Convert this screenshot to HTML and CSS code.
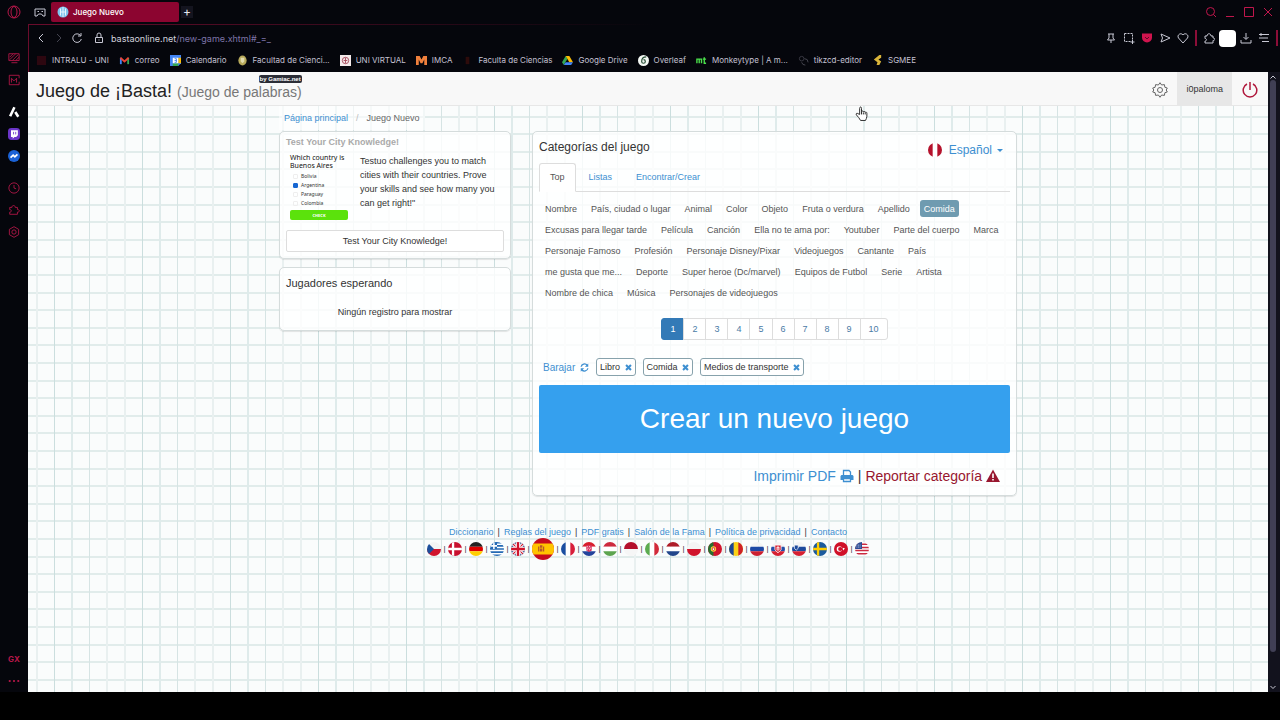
FILE: index.html
```html
<!DOCTYPE html>
<html lang="es">
<head>
    <meta charset="UTF-8">
    <meta name="viewport" content="width=device-width, initial-scale=1.0">
    <title>Juego Nuevo</title>
    <link rel="stylesheet" href="styles.css">
</head>
<body>

    <div class="browser">
        <aside class="sidebar">
            <button class="side-btn logo" aria-label="Opera"><svg viewBox="0 0 14 14"><circle cx="7" cy="7" r="6"/><ellipse cx="7" cy="7" rx="3" ry="5.5"/></svg></button>
            <button class="side-btn" aria-label="Fondo"><svg viewBox="0 0 14 14"><path d="M1 2h12v8H1zM4 12.500h7M2 6l4-4M2 9l7-7M5 10l7-7M9 10l4-4"/></svg></button>
            <button class="side-btn" aria-label="Mods"><svg viewBox="0 0 14 14"><path d="M13 9v3.500H1.500V1.500H13V5M4 10V5l3 3 3-3v5"/></svg></button>
            <button class="side-btn aria" aria-label="Aria"><svg viewBox="0 0 14 14"><path d="M7.500 1.500L2.500 12M8.500 7l3.500 5.500"/></svg></button>
            <button class="side-btn" aria-label="Twitch"><svg viewBox="0 0 14 14"><rect class="twitch" width="14" height="14" rx="4"/><path class="twitch-box" d="M3.500 2.500h8v6l-2 2H7.500l-2 2v-2h-2z"/><path class="twitch-eyes" d="M6.500 4.500v3M9 4.500v3"/></svg></button>
            <button class="side-btn messenger" aria-label="Messenger"><svg viewBox="0 0 14 14"><circle class="blue" cx="7" cy="7" r="7"/><path class="white" d="M3 9l3-3 2 2 3-3"/></svg></button>
            <button class="side-btn" aria-label="Historial"><svg viewBox="0 0 14 14"><circle cx="7" cy="7" r="6"/><path d="M7 3.500V7l2.500 1"/></svg></button>
            <button class="side-btn" aria-label="Extensiones"><svg viewBox="0 0 14 14"><path d="M2 4h2.500c0-3 4-3 4 0H11v2.500c3 0 3 3 0 3V12H2V9.500c2.500 0 2.500-3 0-3z"/></svg></button>
            <button class="side-btn" aria-label="Ajustes"><svg viewBox="0 0 14 14"><path d="M7 .8l5.400 3.100v6.200L7 13.200l-5.400-3.100V3.900z"/><circle cx="7" cy="7" r="2.500"/></svg></button>
            <span class="gx">GX</span>
            <button class="side-btn dots" aria-label="Más"><svg viewBox="0 0 14 14"><circle cx="2" cy="7" r="1.300"/><circle cx="7" cy="7" r="1.300"/><circle cx="12" cy="7" r="1.300"/></svg></button>
        </aside>

        <div class="window">
            <div class="tab-bar">
                <svg class="gamepad" viewBox="0 0 12 12"><path d="M1 3h10v7H9L7.500 8h-3L3 10H1zM3.500 5.500h1.500M7.500 5.500H9"/></svg>
                <div class="tab">
                    <svg viewBox="0 0 12 12"><circle cx="6" cy="6" r="5.500" fill="#7fc4ee"/><path d="M3.500 2.500v7M6 1v10M8.500 2.500v7M3 6h6" stroke="#e8f6ff" fill="none"/></svg>
                    <span>Juego Nuevo</span>
                </div>
                <button class="new-tab" aria-label="Nueva pestaña">+</button>
                <div class="win-controls">
                    <svg viewBox="0 0 12 12"><circle cx="5.500" cy="5.500" r="4"/><path d="M8.500 8.500L11 11"/></svg>
                    <svg viewBox="0 0 12 12"><path d="M2 10.500h8"/></svg>
                    <svg viewBox="0 0 12 12"><path d="M1.500 1.500h9v9h-9z"/></svg>
                    <svg viewBox="0 0 12 12"><path d="M2 2l8 8M10 2l-8 8"/></svg>
                </div>
            </div>

            <div class="address-bar">
                <div class="nav-icons">
                    <svg viewBox="0 0 12 12"><path d="M8 2L4 6l4 4"/></svg>
                    <svg class="off" viewBox="0 0 12 12"><path d="M4 2l4 4-4 4"/></svg>
                    <svg viewBox="0 0 12 12"><path d="M9.500 3.500A4.300 4.300 0 1 0 10.300 7M10 1v3H7"/></svg>
                </div>
                <svg class="lock" viewBox="0 0 12 12"><path d="M2.500 5.500h7v5h-7zM4 5.500V3a2 2 0 0 1 4 0v2.500M6 7.500v1"/></svg>
                <span class="url">bastaonline.net<span>/new-game.xhtml#_=_</span></span>
                <div class="tools">
                    <svg viewBox="0 0 12 12"><path d="M3 2h6M4 2v4L2.500 8h7L8 6V2M6 8v3"/></svg>
                    <svg viewBox="0 0 12 12"><path d="M1.500 1.500h8v6M1.500 1.500v8h6" stroke-dasharray="2 1"/><path d="M9.500 8v4M7.500 10h4"/></svg>
                    <svg viewBox="0 0 12 12"><path class="shield" d="M1 1.500h10v4a5 5 0 0 1-10 0z"/><path d="M4 5l2 2 2-2" stroke="#5c0a24"/></svg>
                    <svg viewBox="0 0 12 12"><path d="M2 2l9 4-9 4 1.500-4z"/></svg>
                    <svg viewBox="0 0 12 12"><path d="M6 11L1.500 6C-.5 3 4 0 6 3c2-3 6.500 0 4.500 3z"/></svg>
                    <i class="divider"></i>
                    <svg viewBox="0 0 12 12"><path d="M2 4h2c0-3 4-3 4 0h2v2c2.500 0 2.500 2.500 0 2.500V11H2V9c2 0 2-2.500 0-2.500z"/></svg>
                    <i class="avatar"></i>
                    <svg viewBox="0 0 12 12"><path d="M6 1v6M3.500 5L6 7.500 8.500 5M1 8v3h10V8"/></svg>
                    <svg viewBox="0 0 12 12"><path d="M1 2.500h10M1 6h7M4 9.500h7M3 1v3M9 5v2"/></svg>
                    <i class="divider"></i>
                </div>
            </div>

            <nav class="bookmarks">
                <a href="#"><svg viewBox="0 0 12 12"><rect x="1" y="1" width="10" height="10" fill="#2d0710"/></svg>INTRALU - UNI</a>
                <a href="#"><svg viewBox="0 0 12 12"><path d="M2 10V3" stroke="#4285f4" stroke-width="2"/><path d="M10 10V3" stroke="#34a853" stroke-width="2"/><path d="M1.500 3L6 7l4.500-4" stroke="#ea4335" stroke-width="2" fill="none"/></svg>correo</a>
                <a href="#"><svg viewBox="0 0 12 12"><path d="M0 0h12v9l-3 3H0z" fill="#4285f4"/><path d="M9 3h3v6H9z" fill="#fbbc04"/><path d="M3 9h6v3H3z" fill="#34a853"/><path d="M3 3h6v6H3z" fill="#fff"/><path d="M5 4h2v4H5M5 6h2" stroke="#4285f4" fill="none"/></svg>Calendario</a>
                <a href="#"><svg viewBox="0 0 12 12"><ellipse cx="6" cy="6" rx="4.500" ry="5.500" fill="#b7a95a"/><path d="M4 3h4v4L6 9 4 7z" fill="#e2dcae"/></svg>Facultad de Cienci...</a>
                <a href="#"><svg viewBox="0 0 12 12"><rect width="12" height="12" fill="#f3e9ea"/><circle cx="6" cy="6" r="3.500" fill="none" stroke="#a5485a"/><path d="M6 3v6M4 6h4" stroke="#a5485a"/></svg>UNI VIRTUAL</a>
                <a href="#"><svg viewBox="0 0 12 12"><path d="M0 1h4l2 4 2-4h4v10H9V5L7 9H5L3 5v6H0z" fill="#f0803c"/></svg>IMCA</a>
                <a href="#"><svg viewBox="0 0 12 12"><path d="M4 2h4v8H4z" fill="#2d0b0b"/></svg>Faculta de Ciencias</a>
                <a href="#"><svg viewBox="0 0 12 12"><path d="M4 1L0 8l2 3 4-7z" fill="#34a853"/><path d="M4 1h4l4 7H8z" fill="#fbbc04"/><path d="M4 8h8l-2 3H2z" fill="#4285f4"/></svg>Google Drive</a>
                <a href="#"><svg viewBox="0 0 12 12"><circle cx="6" cy="6" r="6" fill="#f4f8f4"/><path d="M9 2C6 2 4 4 4 7a2 2 0 1 0 2-2" stroke="#264d35" stroke-width="1.300" fill="none"/></svg>Overleaf</a>
                <a href="#"><svg viewBox="0 0 12 12"><path d="M1 9V4.500h5V9M3.500 5v4M9 2.500V9h2M7.500 4.500H11" stroke="#4be04b" stroke-width="1.500" fill="none"/></svg>Monkeytype | A m...</a>
                <a href="#"><svg viewBox="0 0 12 12"><circle cx="4" cy="4" r="2.500" fill="none" stroke="#3a3a44"/><path d="M7 4a4 4 0 0 1 4 4M4 8a4 4 0 0 0 4 3" fill="none" stroke="#4a4a54"/></svg>tikzcd-editor</a>
                <a href="#"><svg viewBox="0 0 12 12"><path d="M8 0h2v3L7 5l3 2-2 4H5l1-3-4-3z" fill="#d9b43a"/></svg>SGMEE</a>
            </nav>

            <div class="viewport">
                <div class="page">
                    <header class="site-header">
                        <h1>Juego de ¡Basta! <small>(Juego de palabras)</small><span class="by">by Gamiac.net</span></h1>
                        <div class="user-menu">
                            <button class="gear" aria-label="Configuración"><svg viewBox="0 0 16 16"><path d="M8 .7l1.600 2.300 2.800-.4.5 2.700L15.300 6 14.200 8l1.100 2-2.400.7-.5 2.700-2.800-.4L8 15.300 6.400 13l-2.800.4-.5-2.700L.7 10l1.100-2L.7 6l2.400-.7.5-2.700 2.800.4z"/><circle cx="8" cy="8" r="2.500"/></svg></button>
                            <a class="user" href="#">i0paloma</a>
                            <button class="power" aria-label="Salir"><svg viewBox="0 0 16 16"><path d="M5 2A6.800 6.800 0 1 0 11 2M8 0v8"/></svg></button>
                        </div>
                    </header>

                    <div class="container">
                        <div class="breadcrumb"><a href="#">Página principal</a><i>/</i><span>Juego Nuevo</span></div>

                        <div class="columns">
                            <div class="left">
                                <section class="panel promo">
                                    <h3>Test Your City Knowledge!</h3>
                                    <div class="promo-body">
                                        <div class="quiz">
                                            <p>Which country is<br>Buenos Aires</p>
                                            <label><input type="checkbox">Bolivia</label>
                                            <label><input type="checkbox" checked>Argentina</label>
                                            <label><input type="checkbox">Paraguay</label>
                                            <label><input type="checkbox">Colombia</label>
                                            <button>CHECK</button>
                                        </div>
                                        <p>Testuo challenges you to match cities with their countries. Prove your skills and see how many you can get right!"</p>
                                    </div>
                                    <button class="promo-btn">Test Your City Knowledge!</button>
                                </section>
                                <section class="panel waiting">
                                    <h2>Jugadores esperando</h2>
                                    <p>Ningún registro para mostrar</p>
                                </section>
                            </div>

                            <section class="panel game">
                                <div class="game-head">
                                    <h2>Categorías del juego</h2>
                                    <button class="language">
                                        <svg class="flag" viewBox="0 0 18 18"><path fill="#fff" d="M0 0h18v18H0z"/><path fill="#b5122c" d="M0 0h6v18H0zM12 0h6v18h-6z"/></svg>
                                        Español <i class="caret"></i>
                                    </button>
                                </div>
                                <nav class="tabs">
                                    <a class="active" href="#">Top</a>
                                    <a href="#">Listas</a>
                                    <a href="#">Encontrar/Crear</a>
                                </nav>
                                <div class="categories">
                                    <div><button>Nombre</button><button>País, ciudad o lugar</button><button>Animal</button><button>Color</button><button>Objeto</button><button>Fruta o verdura</button><button>Apellido</button><button class="selected">Comida</button></div>
                                    <div><button>Excusas para llegar tarde</button><button>Película</button><button>Canción</button><button>Ella no te ama por:</button><button>Youtuber</button><button>Parte del cuerpo</button><button>Marca</button></div>
                                    <div><button>Personaje Famoso</button><button>Profesión</button><button>Personaje Disney/Pixar</button><button>Videojuegos</button><button>Cantante</button><button>País</button></div>
                                    <div><button>me gusta que me...</button><button>Deporte</button><button>Super heroe (Dc/marvel)</button><button>Equipos de Futbol</button><button>Serie</button><button>Artista</button></div>
                                    <div><button>Nombre de chica</button><button>Música</button><button>Personajes de videojuegos</button></div>
                                </div>
                                <nav class="pagination">
                                    <a class="active" href="#">1</a><a href="#">2</a><a href="#">3</a><a href="#">4</a><a href="#">5</a><a href="#">6</a><a href="#">7</a><a href="#">8</a><a href="#">9</a><a href="#">10</a>
                                </nav>
                                <div class="chosen">
                                    <a href="#">Barajar <svg viewBox="0 0 12 12"><path d="M1.500 5A4.500 4.500 0 0 1 9.500 3M10.500 7a4.500 4.500 0 0 1-8 2" fill="none" stroke="currentColor" stroke-width="1.700"/><path d="M11 .5V5H6.500zM1 11.500V7h4.500z" fill="currentColor"/></svg></a>
                                    <button>Libro <svg viewBox="0 0 10 10"><path d="M1.500 1.500l7 7M8.500 1.500l-7 7"/></svg></button>
                                    <button>Comida <svg viewBox="0 0 10 10"><path d="M1.500 1.500l7 7M8.500 1.500l-7 7"/></svg></button>
                                    <button>Medios de transporte <svg viewBox="0 0 10 10"><path d="M1.500 1.500l7 7M8.500 1.500l-7 7"/></svg></button>
                                </div>
                                <button class="create">Crear un nuevo juego</button>
                                <div class="actions">
                                    <a href="#">Imprimir PDF <svg viewBox="0 0 14 14"><path d="M3.500 6V1.500h5.500l1.500 1.500v3M3.500 9.500h7v3h-7z" fill="none" stroke="currentColor" stroke-width="1.300"/><path d="M1.500 6h11l1 1v4h-2.500V9H3v2H.5V7z" fill="currentColor"/></svg></a>
                                    <span>|</span>
                                    <a class="report" href="#">Reportar categoría <svg viewBox="0 0 14 14"><path d="M7 .5l7 12.500H0z" fill="currentColor"/><path d="M7 4.500V9M7 10v1.500" stroke="#fff" stroke-width="1.600"/></svg></a>
                                </div>
                            </section>
                        </div>
                    </div>

                    <footer class="site-footer">
                        <div class="links"><a href="#">Diccionario</a><span>|</span><a href="#">Reglas del juego</a><span>|</span><a href="#">PDF gratis</a><span>|</span><a href="#">Salón de la Fama</a><span>|</span><a href="#">Política de privacidad</a><span>|</span><a href="#">Contacto</a></div>
                        <div class="flags">
                            <svg class="flag" viewBox="0 0 18 18"><path fill="#f4f4f4" d="M0 0h18v9H0z"/><path fill="#d0142c" d="M0 9h18v9H0z"/><path fill="#1d4f9c" d="M0 0l9 9-9 9z"/></svg><i>|</i>
                            <svg class="flag" viewBox="0 0 18 18"><path fill="#c8102e" d="M0 0h18v18H0z"/><path stroke="#fff" stroke-width="3" d="M6.500 0v18M0 9h18"/></svg><i>|</i>
                            <svg class="flag" viewBox="0 0 18 18"><path fill="#222" d="M0 0h18v6H0z"/><path fill="#d00" d="M0 6h18v6H0z"/><path fill="#ffce00" d="M0 12h18v6H0z"/></svg><i>|</i>
                            <svg class="flag" viewBox="0 0 18 18"><path fill="#fff" d="M0 0h18v18H0z"/><path stroke="#2569b4" stroke-width="2" d="M0 1h18M0 5h18M0 9h18M0 13h18M0 17h18"/><path fill="#2569b4" d="M0 0h9v9H0z"/><path stroke="#fff" stroke-width="2" d="M5 0v9M0 5h9"/></svg><i>|</i>
                            <svg class="flag" viewBox="0 0 18 18"><path fill="#25397c" d="M0 0h18v18H0z"/><path stroke="#fff" stroke-width="4" d="M0 0l18 18M18 0L0 18"/><path stroke="#cf142b" stroke-width="1.500" d="M0 0l18 18M18 0L0 18"/><path stroke="#fff" stroke-width="6" d="M9 0v18M0 9h18"/><path stroke="#cf142b" stroke-width="3" d="M9 0v18M0 9h18"/></svg><i>|</i>
                            <svg class="flag current" viewBox="0 0 18 18"><path fill="#c60b1e" d="M0 0h18v18H0z"/><path fill="#ffc400" d="M0 4.500h18v9H0z"/><path fill="#b5562b" d="M5 7h1v4H5zM9 7h1v4H9zM6.500 6h2v2h-2zM6.500 8.500h2V11h-2z"/></svg><i>|</i>
                            <svg class="flag" viewBox="0 0 18 18"><path fill="#fff" d="M0 0h18v18H0z"/><path fill="#1b4da0" d="M0 0h6v18H0z"/><path fill="#d81e3a" d="M12 0h6v18h-6z"/></svg><i>|</i>
                            <svg class="flag" viewBox="0 0 18 18"><path fill="#d81e2c" d="M0 0h18v6H0z"/><path fill="#fff" d="M0 6h18v6H0z"/><path fill="#24449c" d="M0 12h18v6H0z"/><path fill="#d8305c" d="M5.500 4h7v7L9 13l-3.500-2z"/><path stroke="#fff" stroke-dasharray="1.500 1.500" d="M6 6h6M7 8h6M6 10h6"/></svg><i>|</i>
                            <svg class="flag" viewBox="0 0 18 18"><path fill="#cd2a3e" d="M0 0h18v6H0z"/><path fill="#fff" d="M0 6h18v6H0z"/><path fill="#5ca44e" d="M0 12h18v6H0z"/></svg><i>|</i>
                            <svg class="flag" viewBox="0 0 18 18"><path fill="#b4102c" d="M0 0h18v9H0z"/><path fill="#f6f6f6" d="M0 9h18v9H0z"/></svg><i>|</i>
                            <svg class="flag" viewBox="0 0 18 18"><path fill="#fff" d="M0 0h18v18H0z"/><path fill="#5cab50" d="M0 0h6v18H0z"/><path fill="#d22a3a" d="M12 0h6v18h-6z"/></svg><i>|</i>
                            <svg class="flag" viewBox="0 0 18 18"><path fill="#ae1c28" d="M0 0h18v6H0z"/><path fill="#fff" d="M0 6h18v6H0z"/><path fill="#21468b" d="M0 12h18v6H0z"/></svg><i>|</i>
                            <svg class="flag" viewBox="0 0 18 18"><path fill="#f4f4f4" d="M0 0h18v9H0z"/><path fill="#d0142c" d="M0 9h18v9H0z"/></svg><i>|</i>
                            <svg class="flag" viewBox="0 0 18 18"><path fill="#d0142c" d="M0 0h18v18H0z"/><path fill="#27702f" d="M0 0h7v18H0z"/><circle cx="7" cy="9" r="3.500" fill="#ffd93b"/><path fill="#fff" stroke="#c22" d="M5.500 7.500h3V10L7 11l-1.500-1z"/></svg><i>|</i>
                            <svg class="flag" viewBox="0 0 18 18"><path fill="#fcd116" d="M0 0h18v18H0z"/><path fill="#1d4596" d="M0 0h6v18H0z"/><path fill="#ce2028" d="M12 0h6v18h-6z"/></svg><i>|</i>
                            <svg class="flag" viewBox="0 0 18 18"><path fill="#f4f4f4" d="M0 0h18v6H0z"/><path fill="#1d48a4" d="M0 6h18v6H0z"/><path fill="#cc2030" d="M0 12h18v6H0z"/></svg><i>|</i>
                            <svg class="flag" viewBox="0 0 18 18"><path fill="#f4f4f4" d="M0 0h18v6H0z"/><path fill="#244ea8" d="M0 6h18v6H0z"/><path fill="#d62032" d="M0 12h18v6H0z"/><path fill="#d62032" stroke="#fff" d="M5 4h8v6l-4 4-4-4z"/><path stroke="#fff" d="M9 5v7M7 7h4M6.500 9h5"/></svg><i>|</i>
                            <svg class="flag" viewBox="0 0 18 18"><path fill="#f4f4f4" d="M0 0h18v6H0z"/><path fill="#1d4a9c" d="M0 6h18v6H0z"/><path fill="#d62032" d="M0 12h18v6H0z"/><path fill="#1d4a9c" stroke="#fff" d="M3 4h5v4L5.500 10.500 3 8z"/></svg><i>|</i>
                            <svg class="flag" viewBox="0 0 18 18"><path fill="#1a5a9c" d="M0 0h18v18H0z"/><path stroke="#fecc00" stroke-width="3" d="M6.500 0v18M0 9h18"/></svg><i>|</i>
                            <svg class="flag" viewBox="0 0 18 18"><path fill="#d01028" d="M0 0h18v18H0z"/><circle cx="7" cy="9" r="3.500" fill="#fff"/><circle cx="8" cy="9" r="2.700" fill="#d01028"/><path fill="#fff" d="M11 7.500l3 .5-2 3z"/></svg><i>|</i>
                            <svg class="flag" viewBox="0 0 18 18"><path fill="#fff" d="M0 0h18v18H0z"/><path stroke="#cc2a40" stroke-width="2" d="M0 3h18M0 7h18M0 11h18M0 15h18"/><path fill="#2c4c94" d="M0 0h9v9H0z"/><path stroke="#fff" stroke-dasharray="1 1" d="M2 4h6M2 6.500h6"/></svg>
                        </div>
                    </footer>

                    <svg class="cursor" viewBox="0 0 14 16"><path d="M5 9V2.500c0-2 2-2 2 0V6c0-1 2-1 2 .5 0-1 2-1 2 .5 0-1 1.800-.8 1.800.8V11c0 2-1 3-1.500 4.500H6C5 13 3 11.500 1.500 9.500c-1-1.500.8-2.300 1.700-1.300z" fill="#fff" stroke="#222"/><path d="M7 6v3M9 7v2M11 7.500V9" stroke="#222"/></svg>
                </div>
                <div class="scrollbar"><svg viewBox="0 0 6 6"><path d="M0.500 4.500L3 2l2.500 2.500"/></svg><i></i><svg viewBox="0 0 6 6"><path d="M0.500 2L3 4.500 5.500 2"/></svg></div>
            </div>
        </div>
    </div>
    <div class="bottom-bar"></div>

</body>
</html>
```
FILE: styles.css
```css
* {
    box-sizing: border-box;
}

body {
    margin: 0;
    min-height: 100vh;
    display: flex;
    flex-direction: column;
    background-color: #05060c;
    font-family: "Liberation Sans", Arial, sans-serif;
    font-size: 9px;
    color: #333;
}

h1, h2, h3, p {
    margin: 0;
    font-weight: normal;
}

a {
    color: #3d8fd1;
    text-decoration: none;
}

button {
    font: inherit;
    color: inherit;
    background: none;
    border: none;
    padding: 0;
    cursor: pointer;
}

.browser {
    flex: 1;
    display: flex;
}

.bottom-bar {
    height: 28px;
    background-color: #000;
}

/* sidebar */
.sidebar {
    width: 28px;
    display: flex;
    flex-direction: column;
    align-items: center;
    gap: 8px;
    padding: 5px 0 4px;
}

.side-btn {
    height: 14px;
}

.side-btn svg {
    display: block;
    width: 12px;
    height: 14px;
    fill: none;
    stroke: #b8174a;
}

.logo {
    margin-bottom: 24px;
}

.logo svg {
    width: 14px;
}

.aria {
    margin-top: 10px;
}

.aria svg {
    stroke: #fff;
    stroke-width: 3;
}

.messenger {
    margin-bottom: 10px;
}

.side-btn .twitch {
    fill: #6b35c9;
    stroke: none;
}

.side-btn .twitch-box {
    fill: #fff;
    stroke: none;
}

.side-btn .twitch-eyes {
    stroke: #6b35c9;
}

.side-btn .blue {
    fill: #1b62d6;
    stroke: none;
}

.side-btn .white {
    stroke: #fff;
    stroke-width: 2;
}

.gx {
    margin-top: auto;
    font: bold 8px/14px Inter, sans-serif;
    color: #b8174a;
}

.dots svg {
    fill: #b8174a;
    stroke: none;
}

/* browser bars */
.window {
    flex: 1;
    min-width: 0;
    display: flex;
    flex-direction: column;
    font-family: Inter, sans-serif;
    font-size: 8px;
}

.tab-bar {
    height: 24px;
    display: flex;
    align-items: center;
    padding: 0 6px;
    color: #e6e6ee;
}

.tab-bar svg,
.address-bar svg {
    width: 12px;
    height: 12px;
    fill: none;
    stroke: #c8c8d4;
}

.gamepad {
    margin-right: 5px;
}

.tab {
    width: 128px;
    height: 20px;
    display: flex;
    align-items: center;
    gap: 4px;
    padding: 0 6px;
    border-radius: 2px;
    background-color: #8c0530;
    color: #fff;
    font-weight: 500;
}

.tab svg {
    stroke: none;
}

.new-tab {
    width: 12px;
    height: 12px;
    margin-left: 2px;
    background-color: #14141f;
    font-size: 12px;
    line-height: 12px;
}

.win-controls {
    display: flex;
    gap: 7px;
    margin-left: auto;
}

.win-controls svg {
    stroke: #c0164c;
}

.address-bar {
    height: 27px;
    display: flex;
    align-items: center;
    padding: 0 2px 0 6px;
    border-top: 1px solid;
    border-left: 1px solid;
    border-image: linear-gradient(to right, #6b0c2c, #05060c 50%) 1;
    color: #d2d2dc;
    font-size: 9px;
}

.nav-icons {
    display: flex;
    gap: 6px;
    margin-right: 10px;
}

.address-bar .off {
    stroke: #444450;
}

.lock {
    margin-right: 6px;
}

.url span {
    color: #7d74a8;
}

.tools {
    display: flex;
    align-items: center;
    gap: 6px;
    margin-left: auto;
}

.address-bar .shield {
    fill: #d0144e;
    stroke: none;
}

.divider {
    width: 2px;
    height: 16px;
    background-color: #8c0e38;
}

.avatar {
    width: 17px;
    height: 17px;
    margin: 0 -2px;
    border-radius: 4px;
    background-color: #fff;
}

.bookmarks {
    height: 21px;
    display: flex;
    gap: 10px;
    padding: 0 7px;
    border-left: 1px solid #6b0c2c;
    white-space: nowrap;
}

.bookmarks a {
    display: flex;
    align-items: center;
    height: 18px;
    gap: 5px;
    color: #c4c1d2;
}

.bookmarks svg {
    width: 11px;
    height: 11px;
}

.viewport {
    flex: 1;
    display: flex;
    font-size: 9px;
}

.scrollbar {
    width: 12px;
    padding: 2px 4px 2px 2px;
    display: flex;
    flex-direction: column;
    background-color: #12121d;
}

.scrollbar svg {
    width: 6px;
    height: 6px;
    fill: none;
    stroke: #c8c8d4;
}

.scrollbar i {
    flex: 1;
    margin-bottom: 32px;
    border-radius: 3px;
    background-color: #403f55;
}

/* page on squared paper */
.page {
    flex: 1;
    position: relative;
    font-family: "Liberation Sans", Arial, sans-serif;
    background-color: #fafcfc;
    background-image:
        linear-gradient(to right, transparent 8px, #e9f0f0 8px 10px, transparent 10px 26px, #cbdede 26px 27px, transparent 27px 43px, #dfebeb 43px 45px, transparent 45px 61px, #d6e4e4 61px 62px, transparent 62px 78px, #e9f0f0 78px 80px, transparent 80px),
        linear-gradient(to bottom, transparent 8px, #e1eceb 8px 10px, transparent 10px 26px, #e1eceb 26px 28px, transparent 28px 44px, #e1eceb 44px 46px, transparent 46px 61px, #e1eceb 61px 63px, transparent 63px 79px, #e1eceb 79px 81px, transparent 81px);
    background-size: 88px 88px;
}

.site-header {
    height: 34px;
    display: flex;
    justify-content: space-between;
    padding-left: 8px;
    background-color: #f8f8f8;
    border-bottom: 1px solid #e7e7e7;
}

.site-header h1 {
    position: relative;
    font-size: 18px;
    line-height: 38px;
    color: #222;
}

.site-header small {
    font-size: 14px;
    color: #777;
}

.by {
    position: absolute;
    top: 3px;
    right: 0;
    padding: 0 1px;
    border-radius: 2px;
    background-color: #2b2d36;
    color: #fff;
    font-size: 6px;
    font-weight: bold;
    line-height: 8px;
}

.user-menu {
    display: flex;
}

.user-menu svg {
    display: block;
    width: 16px;
    height: 16px;
    fill: none;
    stroke: #666;
}

.gear {
    padding: 2px 9px 0;
}

.user {
    padding: 0 9px;
    background-color: #e7e7e7;
    color: #333;
    line-height: 34px;
}

.power {
    padding: 2px 10px 0;
}

.user-menu .power svg {
    stroke: #b0173b;
    stroke-width: 1.5;
}

.container {
    max-width: 738px;
    margin: 0 auto;
}

.breadcrumb {
    display: flex;
    gap: 8px;
    width: max-content;
    margin-bottom: 1px;
    padding: 0 5px;
    line-height: 24px;
    color: #666;
    background-color: rgba(255, 255, 255, 0.6);
}

.breadcrumb i {
    color: #bbb;
    font-style: normal;
}

.columns {
    display: grid;
    grid-template-columns: 232px 1fr;
    align-items: start;
    gap: 21px;
}

.left {
    display: grid;
    gap: 8px;
}

.panel {
    padding: 7px 6px;
    border: 1px solid #d5dcdc;
    border-radius: 5px;
    background-color: rgba(255, 255, 255, 0.8);
    box-shadow: 0 1px 1px rgba(0, 0, 0, 0.1);
}

.panel h2 {
    font-size: 11px;
    line-height: 16px;
}

.promo {
    padding: 4px 6px 6px;
}

.promo h3 {
    font-size: 9px;
    font-weight: bold;
    line-height: 13px;
    color: #aaa;
}

.promo-body {
    display: flex;
    gap: 12px;
    padding: 5px 0 10px 4px;
}

.promo-body > p {
    flex: 1;
    line-height: 14px;
}

.quiz {
    width: 58px;
    font: 5px/9px "Noto Sans", sans-serif;
}

.quiz p {
    margin-bottom: 2px;
    font-size: 7px;
    line-height: 8px;
    white-space: nowrap;
    color: #111;
}

.quiz label {
    display: flex;
    align-items: center;
    gap: 3px;
    padding-left: 3px;
}

.quiz input {
    appearance: none;
    width: 5px;
    height: 5px;
    margin: 0;
    border: 1px solid #eee;
    border-radius: 1px;
}

.quiz input:checked {
    border-color: #1767d2;
    background-color: #1767d2;
}

.quiz button {
    display: block;
    width: 100%;
    height: 10px;
    margin-top: 2px;
    border-radius: 2px;
    background-color: #5be20c;
    color: #fff;
    font-weight: bold;
    font-size: 4px;
}

.promo-btn {
    width: 100%;
    height: 22px;
    border: 1px solid #ddd;
    border-radius: 2px;
    background-color: #fff;
}

.waiting p {
    padding: 16px 0 6px;
    text-align: center;
}

/* game panel */
.game-head {
    display: flex;
    justify-content: space-between;
    align-items: flex-start;
    height: 24px;
}

.game-head h2 {
    font-size: 12px;
}

.language {
    display: flex;
    align-items: center;
    gap: 7px;
    height: 22px;
    margin-right: 7px;
    font-size: 12px;
    color: #3d8fd1;
}

.flag {
    width: 14px;
    height: 14px;
    border-radius: 50%;
}

.caret {
    margin-left: -2px;
    border: 3px solid transparent;
    border-top-color: #3d8fd1;
    border-bottom: none;
}

.tabs {
    display: flex;
    gap: 2px;
    border-bottom: 1px solid #ddd;
}

.tabs a {
    padding: 0 10px;
    border: 1px solid transparent;
    line-height: 26px;
}

.tabs .active {
    margin-bottom: -1px;
    border-color: #ddd;
    border-bottom-color: #fff;
    border-radius: 3px 3px 0 0;
    background-color: #fff;
    color: #555;
}

.categories {
    display: grid;
    gap: 4px;
    padding: 8px 2px 0;
    color: #555;
}

.categories div {
    display: flex;
    gap: 6px;
}

.categories button {
    height: 17px;
    padding: 0 4px;
    border-radius: 3px;
    white-space: nowrap;
}

.categories .selected {
    background-color: #6f9bb0;
    color: #fff;
}

.pagination {
    display: flex;
    justify-content: center;
    margin: 17px 0 18px;
}

.pagination a {
    padding: 0 8px;
    border: 1px solid #ddd;
    margin-left: -1px;
    background-color: #fff;
    color: #4a7ba6;
    line-height: 20px;
}

.pagination a:last-child {
    border-radius: 0 3px 3px 0;
}

.pagination .active {
    margin-left: 0;
    border-color: #337ab7;
    border-radius: 3px 0 0 3px;
    background-color: #337ab7;
    color: #fff;
}

.chosen {
    display: flex;
    align-items: center;
    gap: 7px;
    padding-left: 4px;
}

.chosen a {
    font-size: 10px;
}

.chosen svg {
    width: 9px;
    height: 9px;
    margin-left: 2px;
    vertical-align: -1px;
}

.chosen button {
    height: 18px;
    padding: 0 3px;
    border: 1px solid #87a2ac;
    border-radius: 3px;
    background-color: #fff;
}

.chosen button svg {
    width: 7px;
    height: 7px;
    stroke: #3d8fd1;
    stroke-width: 3;
}

.create {
    width: 100%;
    height: 68px;
    margin-top: 9px;
    border-radius: 2px;
    background-color: #35a0ee;
    color: #fff;
    font-size: 28px;
}

.actions {
    display: flex;
    justify-content: flex-end;
    gap: 4px;
    padding: 15px 10px 4px 0;
    font-size: 14px;
    line-height: 16px;
}

.actions svg {
    width: 14px;
    height: 14px;
    vertical-align: -2px;
}

.actions .report {
    color: #98172f;
}

/* footer */
.site-footer {
    padding: 30px 0 16px;
    line-height: 12px;
}

.links {
    display: flex;
    justify-content: center;
    gap: 4px;
}

.flags {
    display: flex;
    justify-content: center;
    align-items: center;
    gap: 3px;
}

.flags i {
    width: 1px;
    display: flex;
    justify-content: center;
    font-size: 8px;
    font-style: normal;
}

.flags .current {
    width: 22px;
    height: 22px;
}

/* hand pointer over the page */
.cursor {
    position: absolute;
    top: 34px;
    left: 827px;
    width: 13px;
    height: 15px;
    fill: none;
}
```
